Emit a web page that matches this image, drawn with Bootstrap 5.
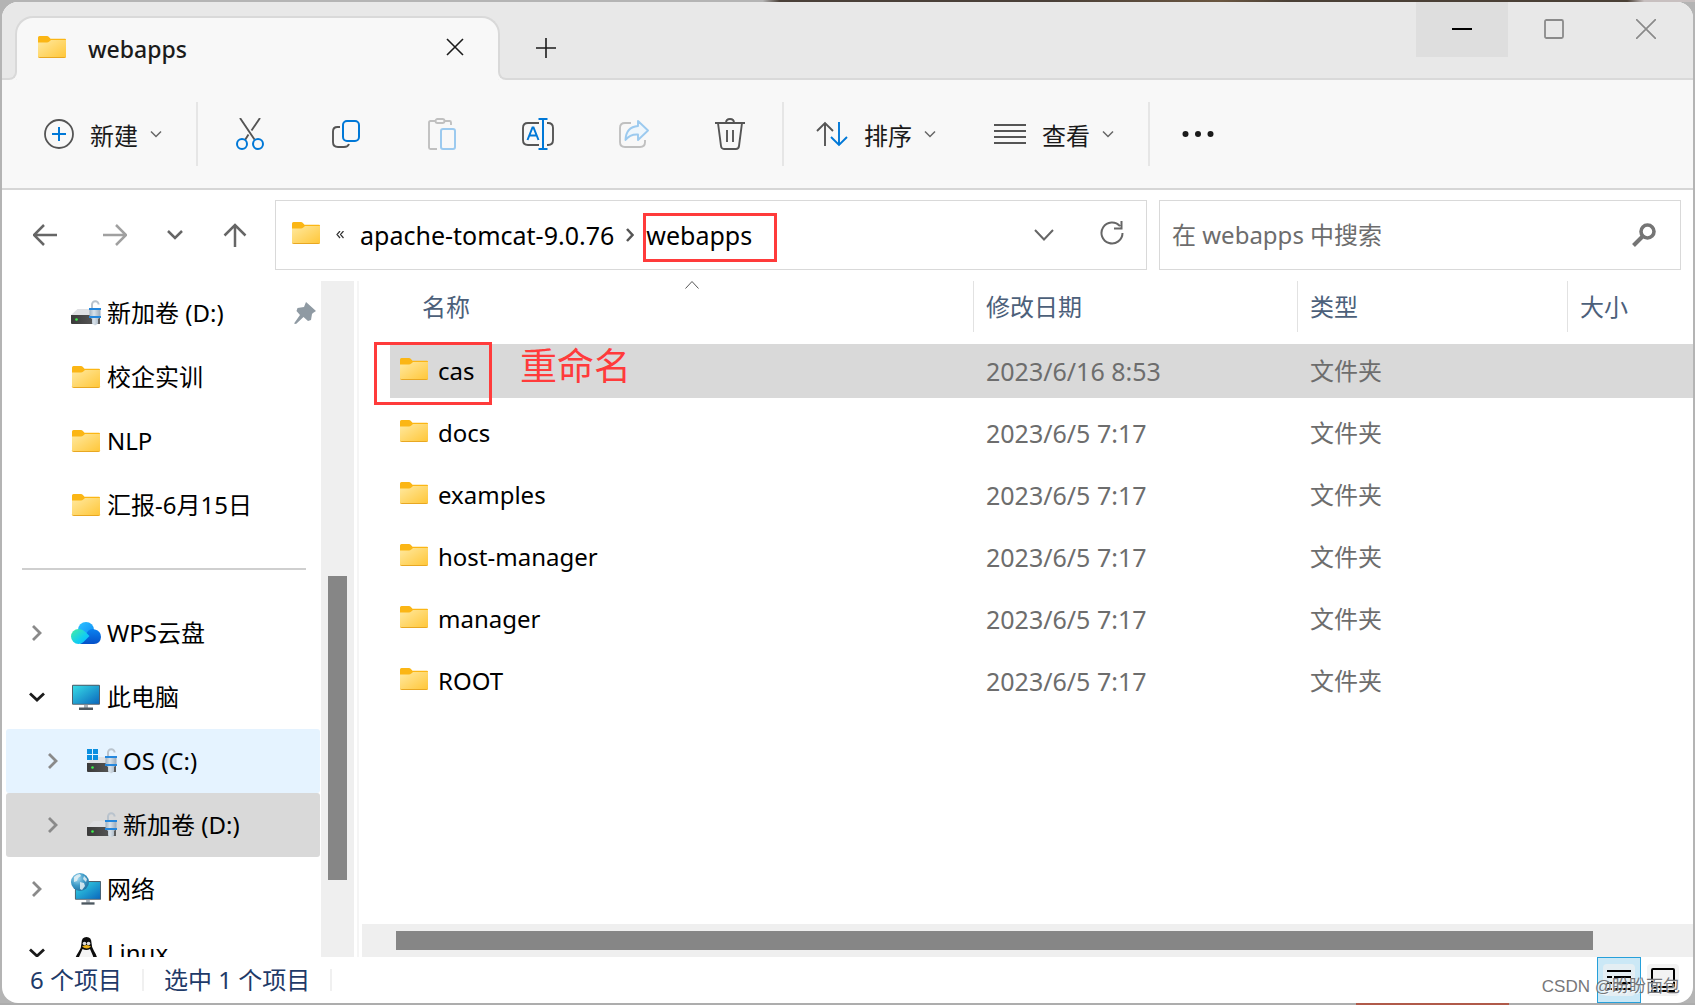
<!DOCTYPE html>
<html lang="zh-CN">
<head>
<meta charset="utf-8">
<meta name="viewport" content="width=device-width, initial-scale=1">
<title>webapps</title>
<link href="https://cdn.jsdelivr.net/npm/bootstrap@5.3.0/dist/css/bootstrap.min.css" rel="stylesheet">
<style>
:root{--ink:#1b1b1b;--edge:#d9d9d9;--chrome:#f8f8f8;--strip:#e8e8e8;--select:#d9d9d9;--note:#ff3b3b}
body{font-family:"Noto Sans","Noto Sans CJK SC",sans-serif;font-size:24px;line-height:32px;color:#000;height:100vh;overflow:hidden;
 background:linear-gradient(90deg,#b4b4b4 0 45%,#4a4038 46% 62%,#6a5640 72%,#4a4036 76% 96%,#c8c0c0 97%) top/100% 2px no-repeat,
 linear-gradient(90deg,#adadad 0 80%,#b05a4a 80% 89%,#adadad 89%) bottom/100% 2px no-repeat,#b4b4b4}
svg{display:block;flex:none}
button{border:0;background:none;padding:0;color:inherit;display:flex;align-items:center;justify-content:center}
.explorer{height:calc(100vh - 4px);margin:2px;border-radius:16px;overflow:hidden;background:#fff}
.titlebar{height:78px;background:var(--strip);border-bottom:2px solid var(--edge);padding:0 1px 0 13px}
.tab-item{width:485px;height:64px;margin-top:14px;background:var(--chrome);border:2px solid var(--edge);border-bottom:0;border-radius:18px 18px 0 0;position:relative;padding:0 34px 4px 21px;font-size:23px;font-weight:500;color:var(--ink)}
.tab-item::before,.tab-item::after{content:"";position:absolute;bottom:0;width:10px;height:10px;border-bottom:2px solid var(--edge);background:var(--strip)}
.tab-item::before{left:-10px;border-right:2px solid var(--edge);border-bottom-right-radius:8px;box-shadow:2px 2px 0 var(--chrome)}
.tab-item::after{right:-10px;border-left:2px solid var(--edge);border-bottom-left-radius:8px;box-shadow:-2px 2px 0 var(--chrome)}
.tab-name{padding:4px 0 0 22px;line-height:24px}
.tab-add{width:92px;height:64px;margin-top:14px}
.win-btn{width:92px;height:55px;padding-bottom:2px}
.win-btn.hot{background:#dedede}
.toolbar{height:110px;background:var(--chrome);border-bottom:2px solid #d6d6d6;color:var(--ink);padding-left:18px}
.tool-icon{width:96px;height:64px}
.tool-menu{height:64px;padding:0 34px 0 24px}
.tool-menu span{padding:4px 12px 0 16px}
.tool-menu .arrow{color:#666}
.tool-rule{width:2px;height:64px;background:#e6e6e6}
.addressbar{padding:10px 12px 11px 0;gap:12px}
.nav-icons{width:261px;padding-left:31px;height:70px;gap:40px}
.boxed{height:70px;border:1px solid var(--edge);background:#fff}
.crumbs{padding:0 22px 0 16px}
.crumb{color:#000;text-decoration:none;font-size:25px}
.crumb-sep{margin:0 12px}
.refresh{margin-left:46px}
.red-frame{position:absolute;border:3px solid var(--note);pointer-events:none}
.red-frame.on-crumb{left:-3px;top:-6px;width:134px;height:49px}
.red-frame.on-file{left:-16px;top:-2px;width:118px;height:63px}
.red-note{position:absolute;left:130px;top:-2px;font-size:37px;line-height:48px;color:var(--note);white-space:nowrap}
.search{width:522px;padding:0 24px 0 12px}
.search input{border:0;outline:0;background:none;color:#6d6d6d;min-width:0;padding:0}
.search input::placeholder{color:#6d6d6d;opacity:1}
.sidebar{width:319px;overflow:hidden;padding:0 1px 0 4px}
.tree-row{height:64px;padding-left:15px;border-radius:3px;color:#000}
.tree-row.child{padding-left:31px}
.tree-row.hover{background:#e5f3ff}
.tree-row.current{background:var(--select)}
.tree-row a{color:inherit;text-decoration:none;gap:6px}
.twisty{width:32px;height:32px;margin-right:18px;flex:none}
.tree-rule{height:64px;padding:31px 14px 31px 16px}
.tree-rule hr{margin:0;border-top:2px solid #cfcfcf;opacity:1}
.vtrack{width:33px;background:#efefef;padding:295px 7px 77px}
.vtrack div{height:100%;background:#868686}
.splitter{width:2px;margin:0 3px;background:#f5f5f5}
.files{width:100%;table-layout:fixed;border-collapse:separate;border-spacing:0}
.files th,.files td{padding:0;white-space:nowrap}
.files th{font-weight:400;color:#4c607a;padding-bottom:8px}
.files td{height:62px;border:solid transparent;border-width:4px 0;background-clip:padding-box;color:#6d6d6d}
.files td.fname{color:#000}
.files td:not(.fname){padding-left:13px}
.files td:nth-child(2){font-size:25px}
.files tr.picked td{background-color:var(--select)}
.col-head{height:51px;border-left:1px solid #e2e2e2;padding-left:12px}
.col-head.first{border:0;padding-left:32px}
.caret-up{position:absolute;left:295px;top:0}
.c-name{width:583px}.c-date{width:324px}.c-type{width:270px}
.file-cell{padding-left:10px;height:54px;gap:10px}
.file-cell svg{margin-bottom:4px}
.htrack{height:33px;background:#efefef;padding:7px 100px 7px 34px}
.htrack div{height:100%;background:#868686}
.statusbar{height:46px;color:#1e3a68;padding-left:28px}
.status-rule{width:2px;height:22px;margin:0 20px;background:#f0f0f0}
.view-btn{width:44px;height:46px;border:1px solid transparent}
.view-btn.active{background:#cbe8f6;border-color:#26a0da}
.watermark{position:absolute;right:13px;top:18px;font-size:17px;line-height:24px;color:#77777a;text-shadow:1px 1px 0 #ffffffb0;font-family:"Liberation Sans","Noto Sans CJK SC",sans-serif}
</style>
<script src="https://cdn.jsdelivr.net/npm/bootstrap@5.3.0/dist/js/bootstrap.bundle.min.js"></script>
</head>
<body>
<svg width="0" height="0" class="position-absolute" aria-hidden="true">
 <defs>
  <linearGradient id="gFolder" x1="0" y1="0" x2="1" y2="1"><stop offset="0" stop-color="#ffe9a0"/><stop offset="1" stop-color="#ffc637"/></linearGradient>
  <linearGradient id="gScreen" x1="0" y1="0" x2="1" y2="1"><stop offset="0" stop-color="#37dbe6"/><stop offset="1" stop-color="#0b68bd"/></linearGradient>
  <linearGradient id="gDisk" x1="0" y1="0" x2="1" y2="0"><stop offset="0" stop-color="#3a3a3a"/><stop offset="1" stop-color="#5c5c5c"/></linearGradient>
  <linearGradient id="gLock" x1="0" y1="0" x2="1" y2="0"><stop offset="0" stop-color="#9fb0c0"/><stop offset=".4" stop-color="#d9e2ea"/><stop offset="1" stop-color="#9aa9b8"/></linearGradient>
  <linearGradient id="gC1" x1="0" y1="0" x2="1" y2="1"><stop offset="0" stop-color="#2fc4ff"/><stop offset="1" stop-color="#0a86f5"/></linearGradient>
  <linearGradient id="gC2" x1="0" y1="0" x2="0" y2="1"><stop offset="0" stop-color="#0a82f0"/><stop offset="1" stop-color="#0550c8"/></linearGradient>
  <linearGradient id="gC3" x1="0" y1="0" x2="1" y2="1"><stop offset="0" stop-color="#46efa0"/><stop offset=".6" stop-color="#12cdf0"/><stop offset="1" stop-color="#0ab0ff"/></linearGradient>
  <radialGradient id="gGlobe" cx=".35" cy=".3" r=".8"><stop offset="0" stop-color="#a7dcf2"/><stop offset=".5" stop-color="#3f9bc8"/><stop offset="1" stop-color="#1c6c9c"/></radialGradient>
 </defs>
 <symbol id="folder" viewBox="0 0 28 22"><path d="M0 7V1.500Q0 0 1.500 0H9q1 0 1.700.7L12.500 2.800H27q1 0 1 1V8H0z" fill="#fbb615"/><path d="M0 6.500h9q1.200 0 2-.8l2-1.700h15v16.500q0 1.500-1.500 1.500h-25Q0 22 0 20.500z" fill="url(#gFolder)"/><path d="M.3 20.800q.4.700 1.200.7h25q.8 0 1.200-.7" stroke="#e8a722" fill="none"/></symbol>
 <symbol id="disk" viewBox="0 0 30 26"><path d="M6.500 9H24l5 6H0z" fill="#dfe0e3"/><path d="M0 15h29v9H1q-1 0-1-1z" fill="url(#gDisk)"/><circle cx="5.500" cy="19.500" r="1.300" fill="#3cf04a"/><path d="M21 8V4.500a3.300 3.300 0 0 1 6.600 0" fill="none" stroke="#b9c3cd" stroke-width="2"/><path d="M18.500 8h11v9l-2.500 2v4.500l-3 2-3-2V19l-2.500-2z" fill="url(#gLock)"/><path d="M18 8h12v2H18zM18 16h12v2H18z" fill="#2487dd"/></symbol>
 <symbol id="chev" viewBox="0 0 12 8"><path d="M1 1.500 6 6.500l5-5" fill="none" stroke="currentColor" stroke-width="1.500"/></symbol>
 <symbol id="tw-right" viewBox="0 0 12 18"><path d="m2 2 7 7-7 7" fill="none" stroke="#8a8a8a" stroke-width="2.800"/></symbol>
 <symbol id="tw-down" viewBox="0 0 18 12"><path d="m2 2.500 7 6.500 7-6.500" fill="none" stroke="#1b1b1b" stroke-width="2.800"/></symbol>
 <symbol id="screen" viewBox="0 0 30 26"><rect x="1" y=".8" width="28" height="20" rx="1" fill="#50606c"/><rect x="2" y="1.800" width="26" height="18" fill="url(#gScreen)"/><path d="M13 21h4v3h-4z" fill="#a9b2ba"/><path d="M8 23.500h14V26H8z" fill="#4d5860"/></symbol>
</svg>

<main class="explorer d-flex flex-column">
 <header class="titlebar d-flex align-items-start flex-shrink-0">
  <div class="tab-item d-flex align-items-center">
   <svg width="28" height="22"><use href="#folder"/></svg>
   <span class="tab-name flex-grow-1">webapps</span>
   <button type="button" aria-label="关闭标签页"><svg width="18" height="18" viewBox="0 0 18 18"><path d="m1 1 16 16M17 1 1 17" stroke="#1b1b1b" stroke-width="1.600"/></svg></button>
  </div>
  <button class="tab-add" type="button" aria-label="新标签页"><svg width="20" height="20" viewBox="0 0 20 20"><path d="M0 10h20M10 0v20" stroke="#1b1b1b" stroke-width="1.600"/></svg></button>
  <div class="ms-auto d-flex">
   <button class="win-btn hot" type="button" aria-label="最小化"><svg width="20" height="20" viewBox="0 0 20 20"><path d="M0 10h20" stroke="#000" stroke-width="2"/></svg></button>
   <button class="win-btn" type="button" aria-label="最大化"><svg width="20" height="20" viewBox="0 0 20 20"><rect x="1" y="1" width="18" height="18" rx="1.500" fill="none" stroke="#8a8a8a" stroke-width="1.800"/></svg></button>
   <button class="win-btn" type="button" aria-label="关闭"><svg width="20" height="20" viewBox="0 0 20 20"><path d="m0 0 20 20M20 0 0 20" stroke="#8a8a8a" stroke-width="1.700"/></svg></button>
  </div>
 </header>

 <div class="toolbar d-flex align-items-center flex-shrink-0">
  <button class="tool-menu" type="button"><svg width="30" height="30" viewBox="0 0 30 30"><circle cx="15" cy="15" r="14" fill="none" stroke="#555" stroke-width="1.800"/><path d="M8 15h14M15 8v14" stroke="#0078d7" stroke-width="2"/></svg><span>新建</span><svg class="arrow" width="12" height="8"><use href="#chev"/></svg></button>
  <div class="tool-rule me-1"></div>
  <button class="tool-icon" type="button" aria-label="剪切"><svg width="28" height="32" viewBox="0 0 28 32"><path d="M4 0l14.500 21.500M24 0l-8.500 12.500M12.500 16.500 9 22" stroke="#555" stroke-width="1.900" fill="none"/><circle cx="6" cy="26" r="5" fill="none" stroke="#0078d7" stroke-width="2"/><circle cx="22" cy="26" r="5" fill="none" stroke="#0078d7" stroke-width="2"/></svg></button>
  <button class="tool-icon" type="button" aria-label="复制"><svg width="28" height="28" viewBox="0 0 28 28"><path d="M8 7H5.500Q1 7 1 11.500V22q0 5 5 5h6q4 0 5-3" fill="none" stroke="#555" stroke-width="1.900"/><rect x="11" y="1" width="16" height="20" rx="4" fill="none" stroke="#0078d7" stroke-width="2"/></svg></button>
  <button class="tool-icon" type="button" aria-label="粘贴"><svg width="28" height="32" viewBox="0 0 28 32"><path d="M7 3H2.500Q1 3 1 4.500v25Q1 31 2.500 31H9M17 3h4.500Q23 3 23 4.500V7" fill="none" stroke="#c0c0c0" stroke-width="1.900"/><rect x="7.500" y="1" width="9" height="4" rx="2" fill="none" stroke="#c0c0c0" stroke-width="1.900"/><rect x="13" y="11" width="14" height="20" rx="2" fill="none" stroke="#9ccaef" stroke-width="2"/></svg></button>
  <button class="tool-icon" type="button" aria-label="重命名"><svg width="32" height="32" viewBox="0 0 32 32"><path d="M17 5H6Q1 5 1 10v12q0 5 5 5h11M25 5h1q5 0 5 5v12q0 5-5 5h-1" fill="none" stroke="#555" stroke-width="1.900"/><path d="M5.500 22 10.500 9.500h1L16.500 22M7.500 17.500h7" fill="none" stroke="#0078d7" stroke-width="2"/><path d="M16.500 1h9M16.500 31h9M21 1v30" stroke="#0078d7" stroke-width="2"/></svg></button>
  <button class="tool-icon" type="button" aria-label="共享"><svg width="30" height="30" viewBox="0 0 30 30"><path d="M12 4H6Q1 4 1 9v14q0 5 5 5h15q5 0 5-5v-2" fill="none" stroke="#c0c0c0" stroke-width="1.900"/><path d="M19 2l10 9.500L19 21v-5.500q-8-.5-12.500 5.500.5-13 12.500-14z" fill="#eef6fc" stroke="#9ccaef" stroke-width="1.900" stroke-linejoin="round"/></svg></button>
  <button class="tool-icon" type="button" aria-label="删除"><svg width="30" height="32" viewBox="0 0 30 32"><path d="M0 5h30M11 5q0-4 4-4t4 4M3 5l3 23q.4 3 3 3h12q2.600 0 3-3l3-23M12 12v12M18 12v12" fill="none" stroke="#555" stroke-width="1.900"/></svg></button>
  <div class="tool-rule ms-1 me-2"></div>
  <button class="tool-menu" type="button"><svg width="32" height="28" viewBox="0 0 32 28"><path d="M9 26V3M1 11l8-8 8 8" fill="none" stroke="#555" stroke-width="1.900"/><path d="M23 2v23M15 17l8 8 8-8" fill="none" stroke="#0078d7" stroke-width="1.900"/></svg><span>排序</span><svg class="arrow" width="12" height="8"><use href="#chev"/></svg></button>
  <button class="tool-menu" type="button"><svg width="32" height="22" viewBox="0 0 32 22"><path d="M0 2h32M0 8h32M0 14h32M0 20h32" stroke="#555" stroke-width="2"/></svg><span>查看</span><svg class="arrow" width="12" height="8"><use href="#chev"/></svg></button>
  <div class="tool-rule"></div>
  <button class="tool-icon" type="button" aria-label="更多"><svg width="32" height="8" viewBox="0 0 32 8"><g fill="#1b1b1b"><circle cx="3.500" cy="4" r="3"/><circle cx="16" cy="4" r="3"/><circle cx="28.500" cy="4" r="3"/></g></svg></button>
 </div>

 <div class="addressbar d-flex flex-shrink-0">
  <div class="nav-icons d-flex align-items-center">
   <button type="button" aria-label="后退"><svg width="30" height="24" viewBox="0 0 30 24"><path d="M24 12H1M11 2 1 12l10 10" fill="none" stroke="#666" stroke-width="2.500"/></svg></button>
   <button type="button" aria-label="前进"><svg width="24" height="24" viewBox="0 0 24 24"><path d="M0 12h23M13 2l10 10-10 10" fill="none" stroke="#a0a0a0" stroke-width="2.500"/></svg></button>
   <button type="button" aria-label="最近的位置"><svg width="16" height="12" viewBox="0 0 16 12"><path d="m1 2 7 7 7-7" fill="none" stroke="#666" stroke-width="2.500"/></svg></button>
   <button type="button" aria-label="向上"><svg width="24" height="24" viewBox="0 0 24 24"><path d="M12 24V2M1.500 12.500 12 2l10.500 10.500" fill="none" stroke="#666" stroke-width="2.500"/></svg></button>
  </div>
  <div class="boxed crumbs flex-grow-1 d-flex align-items-center">
   <svg class="mb-1" width="28" height="22"><use href="#folder"/></svg>
   <svg class="mx-3" width="8" height="8" viewBox="0 0 8 8"><path d="M4 0 1 3.500 4 7M7.500 0l-3 3.500 3 3.500" fill="none" stroke="#333" stroke-width="1.200"/></svg>
   <a class="crumb" href="#">apache-tomcat-9.0.76</a>
   <svg class="crumb-sep" width="8" height="14" viewBox="0 0 8 14"><path d="m1 1 5.500 6L1 13" fill="none" stroke="#555" stroke-width="2.500"/></svg>
   <span class="position-relative"><a class="crumb" href="#">webapps</a><i class="red-frame on-crumb"></i></span>
   <button type="button" class="ms-auto" aria-label="以前的位置"><svg width="20" height="12" viewBox="0 0 20 12"><path d="m1 1 9 9.500L19 1" fill="none" stroke="#666" stroke-width="2"/></svg></button>
   <button type="button" class="refresh mb-1" aria-label="刷新"><svg width="24" height="24" viewBox="0 0 24 24"><path d="M22.500 12A10.500 10.500 0 1 1 20 5.200M21.500 0v7.500H14" fill="none" stroke="#666" stroke-width="2"/></svg></button>
  </div>
  <label class="boxed search d-flex align-items-center">
   <input class="flex-grow-1" type="text" placeholder="在 webapps 中搜索" aria-label="搜索">
   <svg width="24" height="24" viewBox="0 0 24 24"><circle cx="15.500" cy="8.500" r="6.500" fill="none" stroke="#757575" stroke-width="3.600"/><path d="m11 13-9.500 9.500" stroke="#757575" stroke-width="4"/></svg>
  </label>
 </div>

 <div class="flex-grow-1 d-flex overflow-hidden">
  <nav class="sidebar flex-shrink-0">
   <div class="tree-row d-flex align-items-center"><span class="twisty"></span><a class="d-flex align-items-center" href="#"><svg width="30" height="26"><use href="#disk"/></svg>新加卷 (D:)</a><svg class="ms-auto me-1" width="22" height="22" viewBox="0 0 22 22"><path d="M12 0 22 9l-3 2-1 1-1 6-3 1-4.500-4L2 22 0 21.500 6 13 2.500 9l1-3L10 5z" fill="#8f9aa3"/></svg></div>
   <div class="tree-row d-flex align-items-center"><span class="twisty"></span><a class="d-flex align-items-center" href="#"><svg width="30" height="22"><use href="#folder"/></svg>校企实训</a></div>
   <div class="tree-row d-flex align-items-center"><span class="twisty"></span><a class="d-flex align-items-center" href="#"><svg width="30" height="22"><use href="#folder"/></svg>NLP</a></div>
   <div class="tree-row d-flex align-items-center"><span class="twisty"></span><a class="d-flex align-items-center" href="#"><svg width="30" height="22"><use href="#folder"/></svg>汇报-6月15日</a></div>
   <div class="tree-rule"><hr></div>
   <div class="tree-row d-flex align-items-center"><button class="twisty" type="button" aria-label="展开"><svg width="12" height="18"><use href="#tw-right"/></svg></button><a class="d-flex align-items-center" href="#"><svg width="30" height="22" viewBox="0 0 30 22"><circle cx="15" cy="8" r="8" fill="url(#gC1)"/><path d="M17 9q3-3 7-1.500Q30 9 30 15q-.5 7-7 7H9z" fill="url(#gC2)"/><path d="M7.500 7q4 0 7 3l4 4-6 6q-2 2-5 2A7.500 7.500 0 0 1 7.500 7z" fill="url(#gC3)"/></svg>WPS云盘</a></div>
   <div class="tree-row d-flex align-items-center"><button class="twisty" type="button" aria-label="折叠"><svg width="18" height="12"><use href="#tw-down"/></svg></button><a class="d-flex align-items-center" href="#"><svg width="30" height="26"><use href="#screen"/></svg>此电脑</a></div>
   <div class="tree-row child hover d-flex align-items-center"><button class="twisty" type="button" aria-label="展开"><svg width="12" height="18"><use href="#tw-right"/></svg></button><a class="d-flex align-items-center" href="#"><svg width="30" height="26" viewBox="0 0 30 26"><use href="#disk" width="30" height="26"/><path d="M0 1h5v5H0zM6 1h5v5H6zM0 7h5v5H0zM6 7h5v5H6z" fill="#0a8fe0"/></svg>OS (C:)</a></div>
   <div class="tree-row child current d-flex align-items-center"><button class="twisty" type="button" aria-label="展开"><svg width="12" height="18"><use href="#tw-right"/></svg></button><a class="d-flex align-items-center" href="#"><svg width="30" height="26"><use href="#disk"/></svg>新加卷 (D:)</a></div>
   <div class="tree-row d-flex align-items-center"><button class="twisty" type="button" aria-label="展开"><svg width="12" height="18"><use href="#tw-right"/></svg></button><a class="d-flex align-items-center" href="#"><svg width="30" height="32" viewBox="0 0 30 32"><use href="#screen" x="3" y="7" width="28" height="25"/><circle cx="9" cy="9" r="9" fill="url(#gGlobe)"/><path d="M3 4q3-3 6-3l1 2-3 2-1 3-3 1zM9 9l4 1 1 3-3 4-2-1zM13 3l3 3-1 3-3-3z" fill="#e6f1f4" opacity=".85"/></svg>网络</a></div>
   <div class="tree-row d-flex align-items-center"><button class="twisty" type="button" aria-label="折叠"><svg width="18" height="12"><use href="#tw-down"/></svg></button><a class="d-flex align-items-center" href="#"><svg width="30" height="32" viewBox="0 0 30 32"><path d="M15.500 0q5 0 5 6 0 4 2.500 8 4 6 3.500 12l-3 5h-17l-3-5q0-5 4-11 3-4 3-9 0-6 5-6z" fill="#0c0c0c"/><path d="M11.500 12q4 2 7.500 0l3 7q1.500 6-1 11h-12q-2.500-5-1-10z" fill="#f4f4f4"/><circle cx="13.500" cy="6.500" r="1.800" fill="#ddd"/><circle cx="17.500" cy="6.500" r="1.800" fill="#ddd"/><path d="M11 9.500q4.500-3 9 0-4 4-9 0z" fill="#eab018"/></svg>Linux</a></div>
  </nav>
  <div class="vtrack flex-shrink-0"><div></div></div>
  <div class="splitter flex-shrink-0"></div>
  <section class="flex-grow-1 d-flex flex-column overflow-hidden">
   <div class="flex-grow-1 overflow-hidden ps-4 ms-1">
    <table class="files">
     <colgroup><col class="c-name"><col class="c-date"><col class="c-type"><col></colgroup>
     <thead><tr>
      <th scope="col"><div class="col-head first d-flex align-items-center position-relative">名称<svg class="caret-up" width="14" height="8" viewBox="0 0 14 8"><path d="m.5 7.500 6.500-7 6.500 7" fill="none" stroke="#555"/></svg></div></th>
      <th scope="col"><div class="col-head d-flex align-items-center">修改日期</div></th>
      <th scope="col"><div class="col-head d-flex align-items-center">类型</div></th>
      <th scope="col"><div class="col-head d-flex align-items-center">大小</div></th>
     </tr></thead>
     <tbody>
      <tr class="picked"><td class="fname"><div class="file-cell d-flex align-items-center position-relative"><svg width="28" height="22"><use href="#folder"/></svg>cas<i class="red-frame on-file"></i><span class="red-note">重命名</span></div></td><td>2023/6/16 8:53</td><td>文件夹</td><td></td></tr>
      <tr><td class="fname"><div class="file-cell d-flex align-items-center"><svg width="28" height="22"><use href="#folder"/></svg>docs</div></td><td>2023/6/5 7:17</td><td>文件夹</td><td></td></tr>
      <tr><td class="fname"><div class="file-cell d-flex align-items-center"><svg width="28" height="22"><use href="#folder"/></svg>examples</div></td><td>2023/6/5 7:17</td><td>文件夹</td><td></td></tr>
      <tr><td class="fname"><div class="file-cell d-flex align-items-center"><svg width="28" height="22"><use href="#folder"/></svg>host-manager</div></td><td>2023/6/5 7:17</td><td>文件夹</td><td></td></tr>
      <tr><td class="fname"><div class="file-cell d-flex align-items-center"><svg width="28" height="22"><use href="#folder"/></svg>manager</div></td><td>2023/6/5 7:17</td><td>文件夹</td><td></td></tr>
      <tr><td class="fname"><div class="file-cell d-flex align-items-center"><svg width="28" height="22"><use href="#folder"/></svg>ROOT</div></td><td>2023/6/5 7:17</td><td>文件夹</td><td></td></tr>
     </tbody>
    </table>
   </div>
   <div class="htrack flex-shrink-0"><div></div></div>
  </section>
 </div>

 <footer class="statusbar d-flex align-items-center position-relative flex-shrink-0">
  <span>6 个项目</span><span class="status-rule"></span><span>选中 1 个项目</span><span class="status-rule"></span>
  <div class="ms-auto d-flex me-2">
   <button class="view-btn active" type="button" aria-label="详细信息"><svg width="32" height="32" viewBox="0 0 32 32"><rect width="32" height="32" rx="4" fill="#e4eef3"/><path d="M4 7h24M4 13h5m2 0h17M4 19h5m2 0h17M4 25h5m2 0h17" stroke="#000" stroke-width="2"/></svg></button>
   <button class="view-btn" type="button" aria-label="大图标"><svg width="32" height="32" viewBox="0 0 32 32"><rect width="32" height="32" rx="4" fill="#f3f3f3"/><rect x="5" y="5" width="22" height="18" rx="1" fill="none" stroke="#000" stroke-width="2"/><path d="M4 27h6m2 0h16" stroke="#000" stroke-width="2"/></svg></button>
  </div>
  <span class="watermark">CSDN @盼盼面包</span>
 </footer>
</main>
</body>
</html>
